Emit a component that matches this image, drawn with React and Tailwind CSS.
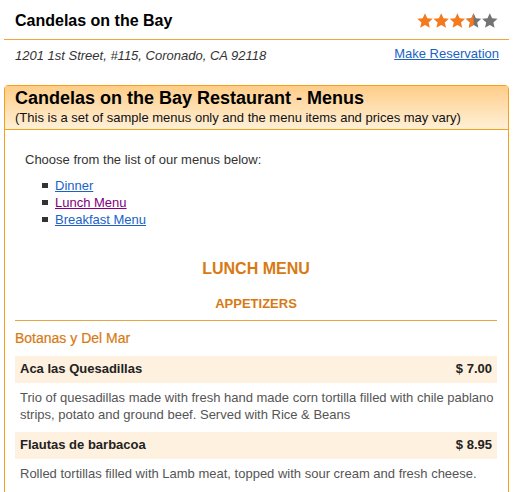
import React from 'react';

const menus = [
  { name: 'Dinner', visited: false },
  { name: 'Lunch Menu', visited: true },
  { name: 'Breakfast Menu', visited: false },
];

const items = [
  {
    name: 'Aca las Quesadillas',
    price: '$ 7.00',
    desc: 'Trio of quesadillas made with fresh hand made corn tortilla filled with chile pablano strips, potato and ground beef. Served with Rice & Beans',
  },
  {
    name: 'Flautas de barbacoa',
    price: '$ 8.95',
    desc: 'Rolled tortillas filled with Lamb meat, topped with sour cream and fresh cheese.',
  },
];

const STAR = 'M8 0.3l2.3 5 5.4 0.5-4.1 3.7 1.2 5.3L8 12.1l-4.8 2.7 1.2-5.3L0.3 5.8l5.4-0.5z';

const Stars = ({ rating }) => (
  <svg width="82" height="16" viewBox="0 0 82 16">
    <defs>
      <clipPath id="halfStar">
        <rect x="0" y="0" width="8" height="16" />
      </clipPath>
    </defs>
    {[0, 1, 2, 3, 4].map((i) => {
      const full = i + 1 <= rating;
      const half = !full && i + 0.5 <= rating;
      return (
        <g key={i} transform={`translate(${i * 16.2} 0)`}>
          <path d={STAR} fill={full ? '#f47a1f' : '#737373'} />
          {half && <path d={STAR} fill="#f47a1f" clipPath="url(#halfStar)" />}
        </g>
      );
    })}
  </svg>
);

export default function App() {
  return (
    <div className="h-[492px] overflow-hidden bg-white px-[4px] font-['Liberation_Sans',Arial,sans-serif] text-[#333]">
      <div className="flex h-[40px] items-center justify-between border-b border-[#f5a33a] pl-[11px] pr-[10px] pt-[2px]">
        <h1 className="text-[16px] font-bold text-black">Candelas on the Bay</h1>
        <Stars rating={3.5} />
      </div>
      <div className="flex justify-between pl-[11px] pr-[10px] pt-[4px]">
        <span className="mt-[2px] text-[13px] italic text-[#333]">1201 1st Street, #115, Coronado, CA 92118</span>
        <a href="#" className="text-[13px] text-[#1a62c6] underline">Make Reservation</a>
      </div>

      <div className="mt-[19px] rounded-t-[4px] border border-[#f6a01a]">
        <div className="h-[44px] border-b border-[#f6a01a] bg-gradient-to-b from-[#fecd88] to-[#fff0d6] px-[10px] pt-[2px]">
          <h2 className="text-[18px] font-bold leading-[21px] text-black">Candelas on the Bay Restaurant - Menus</h2>
          <p className="text-[13px] leading-[18px] text-[#111]">(This is a set of sample menus only and the menu items and prices may vary)</p>
        </div>

        <div className="pl-[10px] pr-[11px] pb-[30px] pt-[21px]">
          <p className="pl-[10px] text-[13px] leading-[17px] text-[#333]">Choose from the list of our menus below:</p>
          <ul className="mt-[9px] pl-[27px]">
            {menus.map((m) => (
              <li key={m.name} className="flex items-center text-[13px] leading-[17px]">
                <span className="mr-[7px] inline-block h-[5px] w-[6px] bg-[#333]"></span>
                <a href="#" className={m.visited ? 'text-[#800080] underline' : 'text-[#1a62c6] underline'}>
                  {m.name}
                </a>
              </li>
            ))}
          </ul>

          <h3 className="mt-[31px] text-center text-[16px] font-bold leading-[20px] text-[#d87a13]">LUNCH MENU</h3>
          <h4 className="mt-[16px] border-b border-[#e9a645] pb-[8px] text-center text-[13px] font-bold leading-[17px] text-[#d87a13]">APPETIZERS</h4>
          <p className="mt-[8px] text-[14px] leading-[18px] text-[#d87a13] [-webkit-text-stroke:0.2px_#d87a13]">Botanas y Del Mar</p>

          <div className="mt-[9px]">
            {items.map((it) => (
              <div key={it.name} className="mb-[9px]">
                <div className="flex h-[27px] items-center justify-between bg-[#fef1df] px-[5px] text-[13px] font-bold text-[#222]">
                  <span>{it.name}</span>
                  <span>{it.price}</span>
                </div>
                <p className="mt-[6px] pl-[5px] text-[13px] leading-[17px] text-[#555]">{it.desc}</p>
              </div>
            ))}
          </div>
        </div>
      </div>
    </div>
  );
}
